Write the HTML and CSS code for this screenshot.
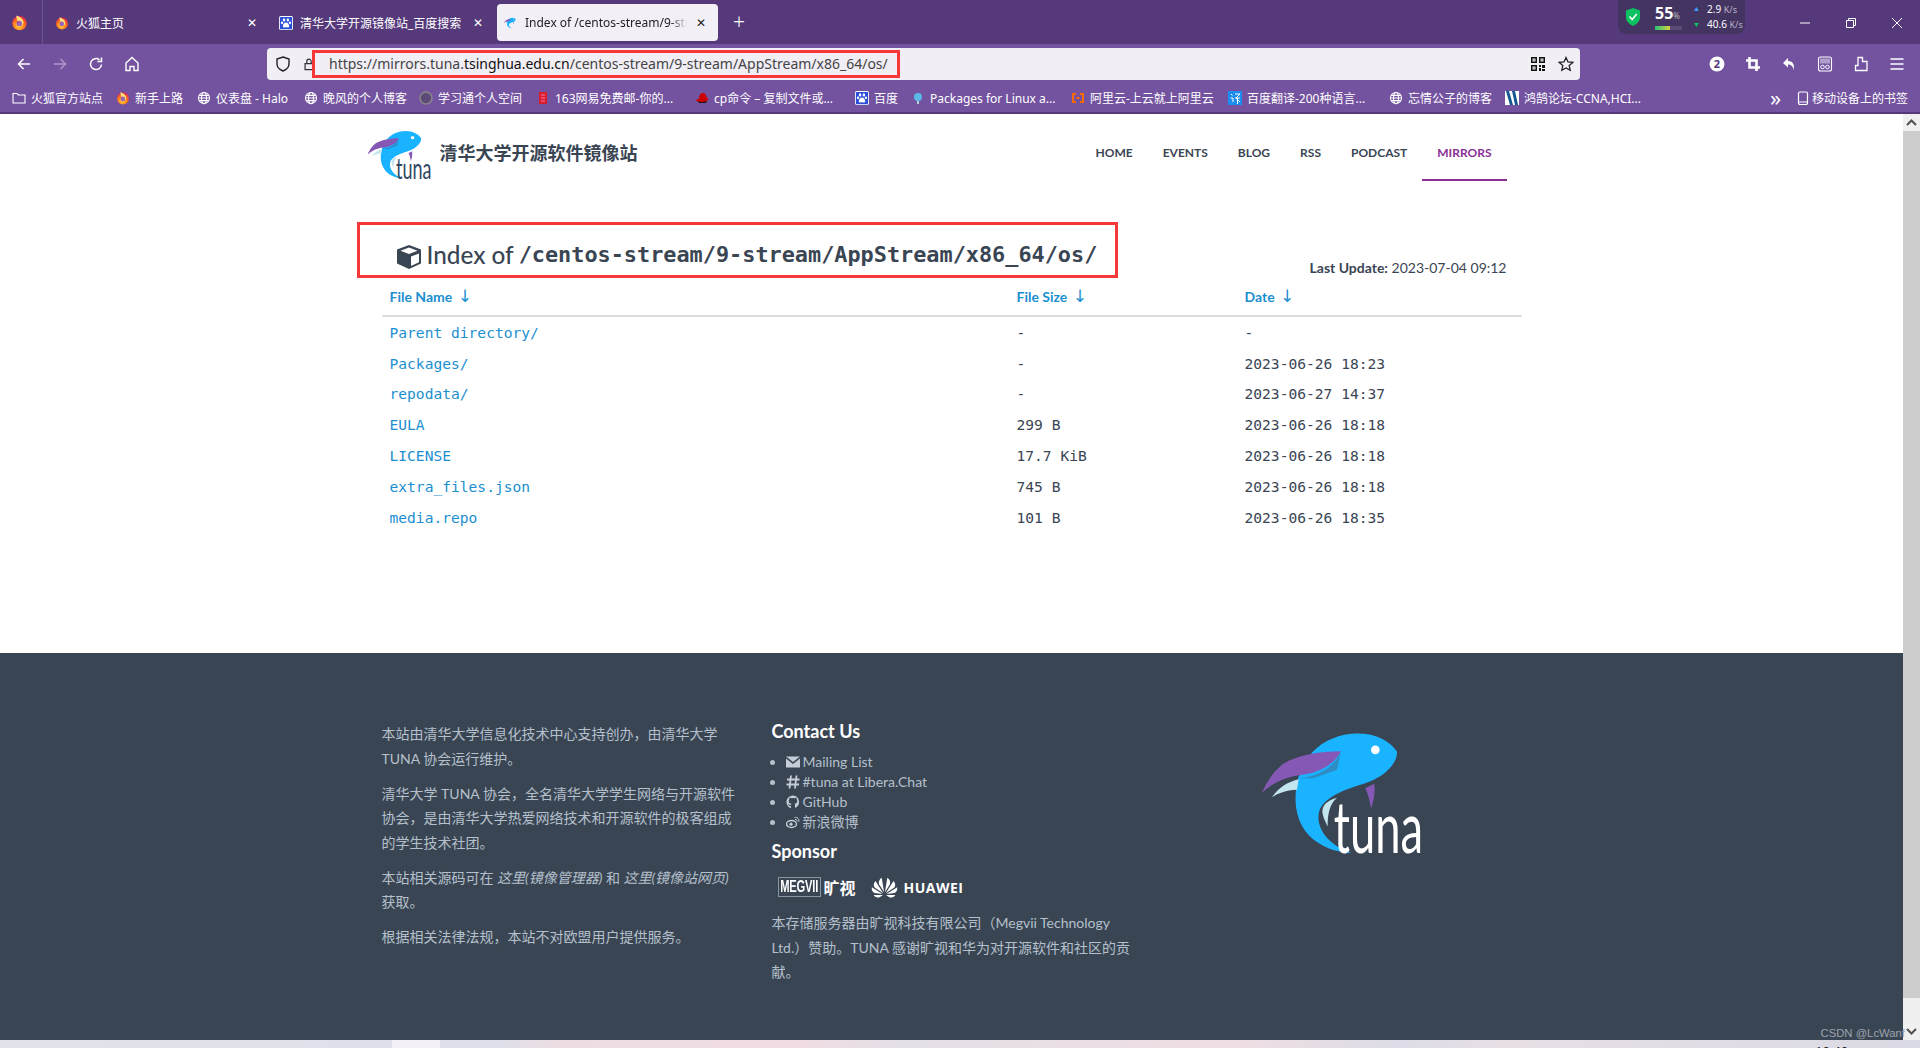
FILE: index.html
```html
<!DOCTYPE html>
<html lang="zh">
<head>
<meta charset="utf-8">
<title>Index of /centos-stream/9-stream/AppStream/x86_64/os/</title>
<link rel="stylesheet" href="styles.css">
</head>
<body>
<svg class="defs" width="0" height="0">
  <defs>
    <radialGradient id="ffg" cx="0.45" cy="0.7" r="0.7"><stop offset="0" stop-color="#ffd53d"/><stop offset="0.55" stop-color="#ff7a1a"/><stop offset="1" stop-color="#e3204f"/></radialGradient>
    <symbol id="ff" viewBox="0 0 16 16">
      <circle cx="8" cy="8.6" r="6.8" fill="url(#ffg)"/>
      <path d="M5 1.5c3 1 5.500 2.500 6.500 5 .8 2-.6 4.500-3.200 4.700-2 .1-3.300-1.300-3.200-2.800 1.200.8 2.500.4 2.700-.5C6.200 7 5 5 5 1.500z" fill="#ffe27a"/>
      <circle cx="7.800" cy="9" r="2.600" fill="#7a3bd0" opacity=".75"/>
    </symbol>
    <symbol id="paw" viewBox="0 0 16 16">
      <rect width="16" height="16" rx="2" fill="#fff"/>
      <rect x="1" y="1" width="14" height="14" rx="1" fill="#2b4fd8"/>
      <ellipse cx="5.800" cy="4.500" rx="1.400" ry="1.800" fill="#fff"/><ellipse cx="10.200" cy="4.500" rx="1.400" ry="1.800" fill="#fff"/>
      <ellipse cx="3.500" cy="7.800" rx="1.300" ry="1.600" fill="#fff"/><ellipse cx="12.500" cy="7.800" rx="1.300" ry="1.600" fill="#fff"/>
      <path d="M8 7.500c2 0 3.700 2.500 3.700 4.200 0 1.600-2 1.500-3.700 1.200-1.700.3-3.700.4-3.700-1.200C4.300 10 6 7.500 8 7.500z" fill="#fff"/>
    </symbol>
    <symbol id="globe" viewBox="0 0 16 16">
      <g fill="none" stroke="#fff" stroke-width="1.200"><circle cx="8" cy="8" r="6.400"/><ellipse cx="8" cy="8" rx="2.800" ry="6.400"/><path d="M1.600 8h12.800M2.500 5h11M2.500 11h11"/></g>
    </symbol>
    <symbol id="fish" viewBox="65 70 483 362">
      <path fill="#19b3ff" d="M215 128C250 90 300 72 350 70 410 70 450 95 470 125 472 165 425 205 370 222 320 238 265 255 240 295 222 335 245 400 335 430 255 425 195 385 175 325 160 280 165 235 175 200Z"/>
      <path fill="#2d8dc4" d="M175 205C235 200 285 170 302 124L290 180 220 205Z"/>
      <path fill="#8558b5" d="M302 124C240 124 165 135 125 165 95 190 78 220 65 248 100 218 130 205 170 197 240 190 280 165 302 124Z"/>
      <path fill="#c3e5ee" d="M95 262C115 232 145 215 175 208L170 240C135 242 115 250 95 262Z"/>
      <path fill="#c3e5ee" d="M290 264C262 272 247 285 246 305 248 325 258 340 262 350 262 320 265 285 290 264Z"/>
      <path fill="#8558b5" d="M375 235L402 222C405 250 400 275 392 296 388 270 384 255 375 235Z"/>
      <circle cx="405" cy="120" r="13" fill="#fff"/>
    </symbol>
  </defs>
</svg>

<header class="browser">
  <div class="tabbar">
    <div class="ffmenu"><svg class="ico14"><use href="#ff"/></svg></div>
    <div class="tab tab-a"><svg class="ico14"><use href="#ff"/></svg><span class="tab-text">火狐主页</span><span class="tab-x">✕</span></div>
    <div class="tab tab-b"><svg class="ico14"><use href="#paw"/></svg><span class="tab-text">清华大学开源镜像站_百度搜索</span><span class="tab-x">✕</span></div>
    <div class="tab tab-active"><svg class="ico14"><use href="#fish"/></svg><span class="tab-text tab-fade">Index of /centos-stream/9-stream/AppStream/x86_64/os/</span><span class="tab-x">✕</span></div>
    <div class="tab-new">+</div>
    <div class="winctl">
      <svg class="ctl" viewBox="0 0 12 12"><path d="M1 6h10" stroke="#fff" stroke-width="1"/></svg>
      <svg class="ctl" viewBox="0 0 12 12"><path d="M1.500 3.500h7v7h-7zM3.500 3.500v-2h7v7h-2" fill="none" stroke="#fff" stroke-width="1"/></svg>
      <svg class="ctl" viewBox="0 0 12 12"><path d="M1 1l10 10M11 1L1 11" stroke="#fff" stroke-width="1"/></svg>
    </div>
    <div class="tray">
      <svg class="tray-shield" viewBox="0 0 14 18"><path d="M7 0l7 2.500v7c0 4-3.500 6.800-7 8.500-3.500-1.700-7-4.500-7-8.500v-7z" fill="#0cc15f"/><path d="M3.500 8.500l2.700 3 4.500-5.500" fill="none" stroke="#fff" stroke-width="1.600"/></svg>
      <div class="tray-cpu"><div class="tray-num">55<small>%</small></div><div class="tray-bar"><i></i></div></div>
      <div class="tray-net">
        <div><em class="up">▲</em>2.9 <small>K/s</small></div>
        <div><em class="down">▼</em>40.6 <small>K/s</small></div>
      </div>
    </div>
  </div>

  <div class="toolbar">
    <div class="navbtns">
      <svg class="tb" viewBox="0 0 16 16"><path d="M14 8H2.500M7.500 3l-5 5 5 5" fill="none" stroke="#fff" stroke-width="1.500"/></svg>
      <svg class="tb dim" viewBox="0 0 16 16"><path d="M2 8h11.500M8.500 3l5 5-5 5" fill="none" stroke="#fff" stroke-width="1.500"/></svg>
      <svg class="tb" viewBox="0 0 16 16"><path d="M13.500 8.500A5.500 5.500 0 1 1 11.500 3.800M13.500 1.500v4h-4" fill="none" stroke="#fff" stroke-width="1.500"/></svg>
      <svg class="tb" viewBox="0 0 16 16"><path d="M8 1.500L2 7v7.500h4v-4h4v4h4V7z" fill="none" stroke="#fff" stroke-width="1.400"/></svg>
    </div>
    <div class="urlbar">
      <svg class="tb" viewBox="0 0 16 16"><path d="M8 1l6 2v5c0 3.500-3 5.800-6 7-3-1.200-6-3.500-6-7V3z" fill="none" stroke="#222" stroke-width="1.400"/></svg>
      <svg class="tb lock" viewBox="0 0 16 16"><path d="M3.500 7.500h9v7h-9zM5.500 7.500V5a2.500 2.500 0 0 1 5 0v2.500" fill="none" stroke="#333" stroke-width="1.400"/></svg>
      <span class="url">https://mirrors.tuna.<b>tsinghua.edu.cn</b>/centos-stream/9-stream/AppStream/x86_64/os/</span>
      <svg class="tb qr" viewBox="0 0 16 16"><path fill="#111" d="M1 1h6v6H1zM2.500 2.500v3h3v-3zM9 1h6v6H9zM10.500 2.500v3h3v-3zM1 9h6v6H1zM2.500 10.500v3h3v-3zM9 9h2v2H9zM12 9h3v3h-3zM9 12h2v3H9zM12 13h3v2h-3zM3.500 3.500h1v1h-1zM11.500 3.500h1v1h-1zM3.500 11.500h1v1h-1z"/></svg>
      <svg class="tb" viewBox="0 0 16 16"><path d="M8 1.500l2 4.400 4.800.5-3.600 3.200 1 4.700L8 12l-4.200 2.300 1-4.700L1.200 6.400 6 5.900z" fill="none" stroke="#222" stroke-width="1.300"/></svg>
      <div class="redbox redbox-url"></div>
    </div>
    <div class="tools">
      <svg class="tb" viewBox="0 0 16 16"><circle cx="8" cy="8" r="7.500" fill="#fff"/><text x="8" y="11.800" class="badge-num">2</text></svg>
      <svg class="tb" viewBox="0 0 16 16"><path d="M4.500 1v10.500H15M1 4.500h10.500V15" fill="none" stroke="#fff" stroke-width="2.600"/></svg>
      <svg class="tb" viewBox="0 0 16 16"><path d="M7 2L2 7l5 4.500V8.500c3 0 5 1.500 5.500 5.500 1.500-5-.5-9-5.500-9z" fill="#fff"/></svg>
      <svg class="tb" viewBox="0 0 16 16"><rect x="1.500" y="1" width="13" height="14" rx="2" fill="none" stroke="#fff" stroke-width="1.100"/><rect x="3" y="2.500" width="10" height="5" fill="#fff" opacity=".45"/><circle cx="5.500" cy="11" r="1.800" fill="none" stroke="#fff"/><circle cx="10.500" cy="11" r="1.800" fill="none" stroke="#fff"/></svg>
      <svg class="tb" viewBox="0 0 16 16"><path d="M5 1.500h4.500v4H14v9H2.500V9.500h2.500z" fill="none" stroke="#fff" stroke-width="1.300"/></svg>
      <svg class="tb" viewBox="0 0 16 16"><path d="M1.500 3h13M1.500 8h13M1.500 13h13" stroke="#fff" stroke-width="1.400"/></svg>
    </div>
  </div>

  <div class="bookmarks">
    <div class="bm"><svg class="ico14" viewBox="0 0 14 14"><path d="M1 2.500h4l1.500 1.500H13v8H1z" fill="none" stroke="#fff" stroke-width="1.100"/></svg><span>火狐官方站点</span></div>
    <div class="bm"><svg class="ico14"><use href="#ff"/></svg><span>新手上路</span></div>
    <div class="bm"><svg class="ico14"><use href="#globe"/></svg><span>仪表盘 - Halo</span></div>
    <div class="bm"><svg class="ico14"><use href="#globe"/></svg><span>晚风的个人博客</span></div>
    <div class="bm"><svg class="ico14" viewBox="0 0 14 14"><circle cx="7" cy="7" r="6" fill="#5d4a78" stroke="#888" stroke-width="1.500"/></svg><span>学习通个人空间</span></div>
    <div class="bm"><svg class="ico14" viewBox="0 0 14 14"><path d="M3 1h8v12H3z" fill="#d81e2a"/><path d="M5 4h4M5 7h4M5 10h4" stroke="#f7b" stroke-width="1"/></svg><span>163网易免费邮-你的...</span></div>
    <div class="bm"><svg class="ico14" viewBox="0 0 14 14"><path d="M1 9c1-1 2-1 3-1 0-4 2-6 4-6s3 2 3.500 4c1 1 2 2 1.500 3-1 1.500-4 2.500-7 2C3.500 11 1.500 10.500 1 9z" fill="#c00"/><path d="M3 10c2 1.500 6 1.500 9 0l-1 2H4z" fill="#111"/></svg><span>cp命令 – 复制文件或...</span></div>
    <div class="bm"><svg class="ico14"><use href="#paw"/></svg><span>百度</span></div>
    <div class="bm"><svg class="ico14" viewBox="0 0 14 14"><circle cx="7" cy="6" r="4" fill="#5cb8e8"/><path d="M7 10v3" stroke="#cfe" stroke-width="1.500"/></svg><span>Packages for Linux a...</span></div>
    <div class="bm"><svg class="ico14" viewBox="0 0 14 14"><path d="M5 3H2v8h3M9 3h3v8H9M5.500 7h3" fill="none" stroke="#ff6a00" stroke-width="2"/></svg><span>阿里云-上云就上阿里云</span></div>
    <div class="bm"><svg class="ico14" viewBox="0 0 14 14"><rect width="14" height="14" fill="#1d8cf0"/><path d="M3 3l1.500 1.500M2.500 7H5v4M7 3h5L8 7l4 4M7 7h5M9.500 7v6" fill="none" stroke="#fff" stroke-width="1"/></svg><span>百度翻译-200种语言...</span></div>
    <div class="bm"><svg class="ico14"><use href="#globe"/></svg><span>忘情公子的博客</span></div>
    <div class="bm"><svg class="ico14" viewBox="0 0 14 14"><rect width="14" height="14" fill="#fff"/><path d="M1 0h3l4 14H5zM7 0h3l3 14h-3z" fill="#14568f"/></svg><span>鸿鹄论坛-CCNA,HCI...</span></div>
    <div class="bm-more">»</div>
    <div class="bm bm-mobile"><svg class="ico14" viewBox="0 0 14 14"><rect x="2.500" y="1" width="9" height="12.500" rx="1.500" fill="none" stroke="#fff" stroke-width="1.200"/><path d="M2.500 11h9" stroke="#fff"/></svg><span>移动设备上的书签</span></div>
  </div>
</header>

<div class="viewport">
  <main class="page">
    <div class="container">
      <div class="topnav">
        <a class="brand">
          <svg class="brand-logo" viewBox="65 70 483 362"><use href="#fish" x="65" y="70" width="483" height="362"/><text x="280" y="430" class="tuna-word tuna-dark" textLength="268" lengthAdjust="spacingAndGlyphs">tuna</text></svg>
          <span class="brand-name">清华大学开源软件镜像站</span>
        </a>
        <nav class="menu">
          <a>HOME</a><a>EVENTS</a><a>BLOG</a><a>RSS</a><a>PODCAST</a><a class="active">MIRRORS</a>
        </nav>
      </div>

      <div class="index-head">
        <h1>
          <svg class="cube" viewBox="0 0 26 24"><path fill="#3a4553" d="M13 0l12 4.500v14L13 24 1 18.500v-14z"/><path fill="#fff" d="M13 2.500L21.500 5.800 13 9 4.500 5.800zM15 11.500l8-3v8.800l-8 3.600z"/></svg>
          <span>Index of</span>
          <code>/centos-stream/9-stream/AppStream/x86_64/os/</code>
        </h1>
        <p class="last-update"><b>Last Update:</b> 2023-07-04 09:12</p>
        <div class="redbox redbox-head"></div>
      </div>

      <div class="listing">
        <div class="row row-head">
          <a>File Name <span class="sort">↓</span></a><a>File Size <span class="sort">↓</span></a><a>Date <span class="sort">↓</span></a>
        </div>
        <div class="row"><a>Parent directory/</a><span>-</span><span>-</span></div>
        <div class="row"><a>Packages/</a><span>-</span><span>2023-06-26 18:23</span></div>
        <div class="row"><a>repodata/</a><span>-</span><span>2023-06-27 14:37</span></div>
        <div class="row"><a>EULA</a><span>299 B</span><span>2023-06-26 18:18</span></div>
        <div class="row"><a>LICENSE</a><span>17.7 KiB</span><span>2023-06-26 18:18</span></div>
        <div class="row"><a>extra_files.json</a><span>745 B</span><span>2023-06-26 18:18</span></div>
        <div class="row"><a>media.repo</a><span>101 B</span><span>2023-06-26 18:35</span></div>
      </div>
    </div>

    <footer class="footer">
      <div class="container footer-grid">
        <div class="fcol">
          <p>本站由清华大学信息化技术中心支持创办，由清华大学 TUNA 协会运行维护。</p>
          <p>清华大学 TUNA 协会，全名清华大学学生网络与开源软件协会，是由清华大学热爱网络技术和开源软件的极客组成的学生技术社团。</p>
          <p>本站相关源码可在 <i>这里(镜像管理器)</i> 和 <i>这里(镜像站网页)</i> 获取。</p>
          <p>根据相关法律法规，本站不对欧盟用户提供服务。</p>
        </div>
        <div class="fcol">
          <h4 class="h-contact">Contact Us</h4>
          <ul class="contact">
            <li><svg class="ci" viewBox="0 0 14 11"><path fill="#c5ced8" d="M0 0h14L7 5.500zM0 2v9h14V2L7 7.500z"/></svg>Mailing List</li>
            <li><svg class="ci" viewBox="0 0 14 14"><path fill="none" stroke="#c5ced8" stroke-width="1.800" d="M5 0.500L3.500 13.500M10.500 0.500L9 13.500M1 4.500h12.500M0.500 9.500h12.500"/></svg>#tuna at Libera.Chat</li>
            <li><svg class="ci" viewBox="0 0 14 14"><path fill="#c5ced8" d="M7 .5a6.500 6.500 0 0 0-2 12.700v-2.300c-1.800.4-2.300-.8-2.400-1.200-.2-.4-.5-.7-.8-.9.6-.3 1.100.2 1.400.7.500.7 1.300.6 1.800.3.100-.4.300-.8.500-1C3.700 8.600 2.800 7.800 2.800 6c0-.7.200-1.200.6-1.700-.1-.2-.2-.9 0-1.600 0 0 .7-.2 1.900.6a6 6 0 0 1 3.400 0c1.200-.8 1.900-.6 1.900-.6.2.7.1 1.400 0 1.600.4.500.6 1 .6 1.700 0 1.800-.9 2.600-2.700 2.800.3.300.5.700.5 1.300v2.900A6.500 6.500 0 0 0 7 .5z"/></svg>GitHub</li>
            <li><svg class="ci" viewBox="0 0 14 12"><ellipse cx="5.500" cy="8" rx="5" ry="3.500" fill="none" stroke="#c5ced8" stroke-width="1.400"/><circle cx="5" cy="8.200" r="1.600" fill="#c5ced8"/><path d="M8.500 1.500c3-.7 5 1.500 4.300 4.300M9 3.500c1.500-.3 2.300.7 2 2" fill="none" stroke="#c5ced8" stroke-width="1"/></svg>新浪微博</li>
          </ul>
          <h4>Sponsor</h4>
          <div class="sponsors">
            <span class="megvii"><span class="megvii-box"><span class="megvii-word">MEGVII</span></span><span class="megvii-cn">旷视</span></span>
            <span class="huawei">
              <svg class="hw-logo" viewBox="0 0 26 20"><g fill="#fff"><path d="M12.600 14.500L10.300.5C8 2 7 4.500 7.800 6.800z"/><path d="M13.400 14.500L15.700.5C18 2 19 4.500 18.200 6.800z"/><path d="M11.800 15.500L4.300 3.800C2.500 5.800 2.200 8.300 3.500 10z"/><path d="M14.200 15.500L21.700 3.800C23.500 5.800 23.800 8.300 22.500 10z"/><path d="M11 16.300L.8 9.800c-.4 2.500.5 4.600 2.500 5.600z"/><path d="M15 16.300l10.200-6.500c.4 2.500-.5 4.600-2.500 5.600z"/><path d="M11.500 17.300H2.500c1 2 3.500 2.900 5.800 2z"/><path d="M14.500 17.300h9c-1 2-3.500 2.900-5.800 2z"/></g></svg>
              <span class="hw-name">HUAWEI</span>
            </span>
          </div>
          <p>本存储服务器由旷视科技有限公司（Megvii Technology Ltd.）赞助。TUNA 感谢旷视和华为对开源软件和社区的贡献。</p>
        </div>
        <div class="fcol fcol-logo">
          <svg class="footer-logo" viewBox="65 70 483 362"><use href="#fish" x="65" y="70" width="483" height="362"/><text x="280" y="430" class="tuna-word tuna-light" textLength="268" lengthAdjust="spacingAndGlyphs">tuna</text></svg>
        </div>
      </div>
      <div class="watermark">CSDN @LcWanf</div>
    </footer>
  </main>
  <aside class="scrollbar">
    <svg class="sb-arrow" viewBox="0 0 17 17"><path d="M4 11l4.500-4.500L13 11" fill="none" stroke="#505050" stroke-width="2"/></svg>
    <div class="sb-track"><div class="sb-thumb"></div></div>
    <svg class="sb-arrow" viewBox="0 0 17 17"><path d="M4 6l4.500 4.500L13 6" fill="none" stroke="#505050" stroke-width="2"/></svg>
  </aside>
</div>
<div class="taskbar"><span class="task-open"></span><span class="clock">10:49</span></div>
</body>
</html>
```
FILE: styles.css
```css
* { box-sizing: border-box; }
html, body { margin: 0; padding: 0; }
body {
  width: 1920px; height: 1048px; overflow: hidden;
  display: flex; flex-direction: column;
  font-family: "Lato", "Noto Sans CJK SC", sans-serif;
  background: #fff;
}
.defs { position: absolute; }
.ico14 { width: 14px; height: 14px; flex: none; }

/* browser chrome */
.browser { height: 114px; flex: none; color: #fff; font-family: "Noto Sans", "Noto Sans CJK SC", sans-serif; font-size: 12px; }
.tabbar { height: 44px; background: #56397b; display: flex; align-items: center; position: relative; }
.ffmenu { width: 43px; height: 44px; display: flex; align-items: center; justify-content: center; border-right: 1px solid #6e5493; padding-right: 3px; }
.ffmenu .ico14 { width: 17px; height: 17px; }
.tab { height: 37px; display: flex; align-items: center; gap: 7px; padding: 0 8px; margin-top: 1px; }
.tab-a { width: 224px; padding-left: 12px; }
.tab-b { width: 226px; padding-left: 12px; padding-right: 8px; }
.tab-active { width: 221px; background: #f3eff6; color: #222; border-radius: 4px; padding-left: 7px; padding-right: 10px; margin-left: 4px; }
.tab-text { flex: 1; white-space: nowrap; overflow: hidden; min-width: 0; }
.tab-fade { -webkit-mask-image: linear-gradient(90deg, #000 90%, transparent); mask-image: linear-gradient(90deg, #000 90%, transparent); }
.tab-x { font-size: 12px; flex: none; width: 14px; text-align: center; }
.tab-new { font-size: 21px; margin-left: 15px; font-weight: 300; }
.winctl { margin-left: auto; display: flex; gap: 34px; padding-right: 17px; margin-top: 1px; }
.ctl { width: 12px; height: 12px; }
.tray { position: absolute; left: 1618px; top: 0; width: 127px; height: 34px; background: #443462; border-radius: 0 0 8px 8px; display: flex; align-items: center; padding-left: 8px; }
.tray-shield { width: 14px; height: 18px; flex: none; }
.tray-cpu { margin-left: 15px; width: 30px; }
.tray-num { font-size: 16px; font-weight: 700; line-height: 16px; white-space: nowrap; }
.tray-num small { font-size: 8px; font-weight: 400; color: #bbb; }
.tray-bar { width: 27px; height: 4px; background: #5a4c74; margin-top: 2px; }
.tray-bar i { display: block; width: 15px; height: 4px; background: linear-gradient(90deg, #27c27c, #d7d33a); }
.tray-net { margin-left: 9px; font-size: 10px; line-height: 15px; white-space: nowrap; }
.tray-net em { font-style: normal; font-size: 5px; margin-right: 8px; vertical-align: 2px; }
.tray-net .up { color: #39a0ff; }
.tray-net .down { color: #0cc15f; }
.tray-net small { font-size: 9px; color: #b9b2c6; }

.toolbar { height: 44px; background: #7352a0; display: flex; align-items: center; padding-bottom: 5px; }
.tb { width: 16px; height: 16px; flex: none; }
.tb.dim { opacity: .4; }
.navbtns { width: 267px; display: flex; gap: 20px; padding-left: 16px; }
.urlbar { width: 1313px; height: 32px; background: #f1eef5; border-radius: 4px; display: flex; align-items: center; padding: 0 6px 0 8px; position: relative; color: #444; }
.lock { margin-left: 11px; width: 14px; }
.url { flex: 1; margin-left: 13px; font-size: 14px; font-family: "Noto Sans", sans-serif; white-space: nowrap; }
.url b { color: #111; font-weight: 400; }
.qr { margin-right: 12px; }
.tools { flex: 1; display: flex; gap: 20px; justify-content: flex-end; padding-right: 15px; }
.badge-num { font: 700 11px "Noto Sans", sans-serif; fill: #56397b; text-anchor: middle; }
.redbox { position: absolute; border: 3px solid #f83838; pointer-events: none; }
.redbox-url { left: 45px; top: 2px; width: 588px; height: 28px; }

.bookmarks { height: 26px; background: #7352a0; border-bottom: 2px solid #56397b; padding-bottom: 4px; display: grid; align-items: center; padding-left: 12px;
  grid-template-columns: 104px 81px 107px 115px 117px 159px 160px 56px 160px 157px 161px 116px 265px 26px 120px; white-space: nowrap; }
.bm { display: flex; align-items: center; gap: 5px; overflow: hidden; font-size: 12px; }
.bm-mobile { gap: 2px; }
.bm-more { font-size: 22px; line-height: 20px; margin-top: -2px; }

/* page */
.viewport { flex: 1; display: flex; min-height: 0; }
.page { flex: 1; min-width: 0; display: flex; flex-direction: column; color: #3a4553; }
.container { width: 1170px; margin: 0 auto; padding: 0; position: relative; }
.topnav { display: flex; justify-content: space-between; height: 67px; padding-right: 30px; }
.brand { display: flex; align-items: center; gap: 8px; padding-top: 14px; height: 67px; }
.brand-logo { width: 65px; height: 48px; overflow: visible; }
.brand-name { font: 700 18px "Noto Sans CJK SC", sans-serif; color: #3a4553; margin-bottom: 6px; }
.tuna-word { font-family: "Lato", sans-serif; font-weight: 400; font-size: 215px; }
.tuna-dark { fill: #2f4763; }
.tuna-light { fill: #fff; }
.menu { display: flex; height: 67px; }
.menu a { padding: 24px 15px 0; font-size: 12px; font-weight: 700; line-height: 30px; height: 67px; color: #3a4553; white-space: nowrap; }
.menu a.active { color: #8a2f94; border-bottom: 2px solid #8a2f94; }

.index-head { display: flex; justify-content: space-between; align-items: flex-start; padding: 41px 30px 0 29px; height: 103px; position: relative; }
.index-head h1 { margin: 18px 0 0; font-size: 24.3px; font-weight: 500; line-height: 30px; display: flex; align-items: center; gap: 5px; color: #3a4553; white-space: nowrap; }
.index-head code { font: 700 21.85px/30px "DejaVu Sans Mono", monospace; }
.cube { width: 26px; height: 24px; flex: none; margin-top: 3px; }
.last-update { margin: 36px 0 0; font-size: 14px; line-height: 20px; white-space: nowrap; }
.redbox-head { left: -10px; top: 41px; width: 761px; height: 56px; }

.listing { padding: 0 15px; }
.row { display: grid; grid-template-columns: 627px 228px 1fr; padding-left: 8px; height: 30.8px; align-items: center; font: 14.6px "DejaVu Sans Mono", monospace; color: #3a4553; white-space: pre; }
.row a { color: #1b8fd0; }
.row-head { font: 700 14px "Lato", sans-serif; height: 33px; border-bottom: 2px solid #ddd; padding-bottom: 7px; }
.sort { font-weight: 400; margin-left: 2px; font-family: "DejaVu Sans", sans-serif; font-size: 17px; line-height: 14px; }

.footer { margin-top: auto; height: 387px; background: #3a4553; color: #b4c0cc; font-size: 14px; line-height: 24.5px; position: relative; }
.footer-grid { display: grid; grid-template-columns: 390px 390px 390px; padding-top: 69px; }
.fcol { padding: 0 15px; }
.fcol p { margin: 0 0 10.500px; }
.fcol i { font-style: italic; }
.fcol h4 { margin: 0; font-size: 18px; line-height: 20px; font-weight: 700; color: #fff; }
.fcol .h-contact { margin-top: -1px; }
.contact { margin: 11px 0 9px; padding: 0 0 0 14px; line-height: 20px; font-size: 14px; }
.contact li { height: 20px; color: #b4c0cc; }
.contact li::marker { color: #b4c0cc; font-size: 14px; }
.ci { width: 14px; height: 14px; margin-right: 3px; vertical-align: -2px; }
.sponsors { height: 50px; padding: 16px 0 0 6px; display: flex; align-items: flex-start; gap: 15px; color: #fff; line-height: 20px; }
.megvii { display: flex; gap: 3px; align-items: center; }
.megvii-box { width: 43px; height: 20px; border: 1px solid #8a95a2; display: flex; justify-content: center; overflow: hidden; }
.megvii-word { font: 700 16px/18px "Liberation Sans", sans-serif; transform: scaleX(.7); letter-spacing: -.3px; white-space: nowrap; }
.megvii-cn { font: 700 16px/20px "Noto Sans CJK SC", sans-serif; }
.huawei { display: flex; align-items: center; gap: 6px; }
.hw-logo { width: 27px; height: 21px; }
.hw-name { font: 700 14px/20px "Open Sans", sans-serif; letter-spacing: .5px; }
.fcol-logo { padding: 0; position: relative; }
.footer-logo { width: 161px; height: 121px; display: block; margin: 11px 0 0 115px; overflow: visible; }
.watermark { position: absolute; right: -2px; bottom: 0; font: 11.3px/14px "Liberation Sans", sans-serif; color: #9aa3ad; white-space: nowrap; }

.scrollbar { width: 17px; flex: none; background: #f0f0f0; display: flex; flex-direction: column; }
.sb-arrow { width: 17px; height: 17px; flex: none; }
.sb-track { flex: 1; padding-bottom: 25px; }
.sb-thumb { height: 100%; background: #cdcdcd; }

.taskbar { height: 8px; flex: none; position: relative; overflow: hidden;
  background: linear-gradient(90deg, #e2e2ea 0, #dfdfea 500px, #eddde2 560px, #f0dde3 800px, #e4dfe7 900px, #e8dfe6 1020px, #f0dee4 1230px, #dcdce6 1400px, #e8dfe6 1500px, #dadae4 1920px); }
.task-open { position: absolute; left: 392px; top: 0; width: 48px; height: 8px; background: #f3f1f7; }
.clock { position: absolute; left: 1815px; top: 4px; font: 13px/14px "Noto Sans", sans-serif; color: #111; }
```
